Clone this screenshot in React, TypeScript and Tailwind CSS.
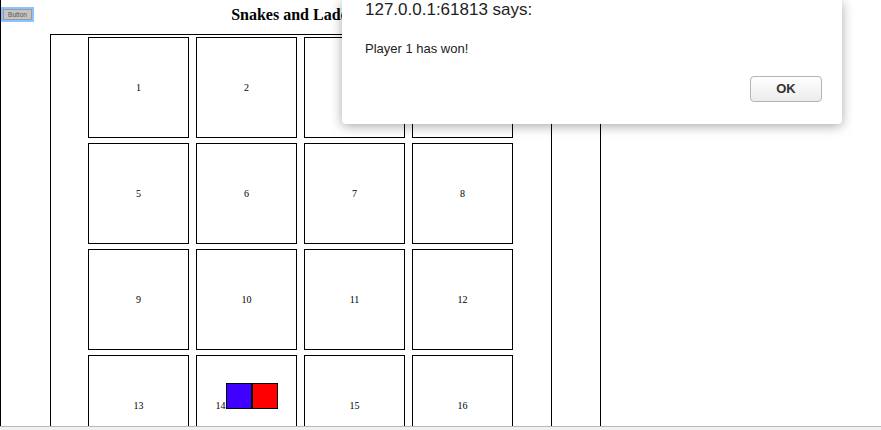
import React from "react";

const cells = Array.from({ length: 16 }, (_, i) => i + 1);

function Cell({ n }: { n: number }) {
  return (
    <div className="w-[101px] h-[101px] border border-black box-border flex items-center justify-center">
      {n === 14 ? (
        <div className="flex items-end h-[12px] leading-[12px]">
          <span>14</span>
          <div className="w-[26px] h-[26px] mb-[3px] border border-black bg-[#4000ff] shrink-0" />
          <div className="w-[26px] h-[26px] mb-[3px] border border-black bg-[#ff0000] shrink-0" />
        </div>
      ) : (
        <span className="leading-[12px]">{n}</span>
      )}
    </div>
  );
}

export default function App() {
  return (
    <div className="relative w-[881px] h-[430px] overflow-hidden bg-white" style={{ fontFamily: '"Liberation Serif", serif' }}>
      <div className="h-[426px] overflow-hidden">
        <div className="w-[601px] h-full border-x border-black box-border">
          <div className="grid grid-cols-[1fr_auto_1fr] h-[34px]">
            <div className="flex items-start pt-[9px] pl-[2px]">
              <button className="w-[29px] h-[11px] bg-[#c4c4c4] border border-[#9a9a9a] outline-2 outline-[#8ec2ff] text-[6.5px] leading-[9px] text-[#555] font-['Liberation_Sans',sans-serif]">
                Button
              </button>
            </div>
            <h1 className="text-[16px] font-bold leading-[20px] pt-[5px] text-black">Snakes and Ladders</h1>
            <div />
          </div>
          <div className="ml-[49px] w-[502px] border border-black box-border pl-[37px] pt-[2px] pb-[20px]">
            <div className="grid grid-cols-[repeat(4,101px)] gap-x-[7px] gap-y-[5px] text-[10px] text-black">
              {cells.map((n) => (
                <Cell key={n} n={n} />
              ))}
            </div>
          </div>
        </div>
      </div>
      <div className="h-[4px] border-t border-[#b8b8b8] bg-[#f0f0f0]" />

      <div className="absolute left-[342px] top-0 w-[500px] h-[124px] bg-white rounded-b-[4px] shadow-[0_2px_12px_rgba(0,0,0,0.35)] font-['Liberation_Sans',sans-serif] text-[#222]">
        <div className="pl-[23px] pt-[0px] text-[17px] leading-[20px]">127.0.0.1:61813 says:</div>
        <div className="pl-[23px] pt-[21px] text-[13px] leading-[16px]">Player 1 has won!</div>
        <div className="flex justify-end pr-[20px] pt-[19px]">
          <button className="w-[72px] h-[26px] rounded-[4px] border border-[#b4b4b4] bg-gradient-to-b from-white to-[#ececec] text-[13px] font-bold text-[#333]">
            OK
          </button>
        </div>
      </div>
    </div>
  );
}
